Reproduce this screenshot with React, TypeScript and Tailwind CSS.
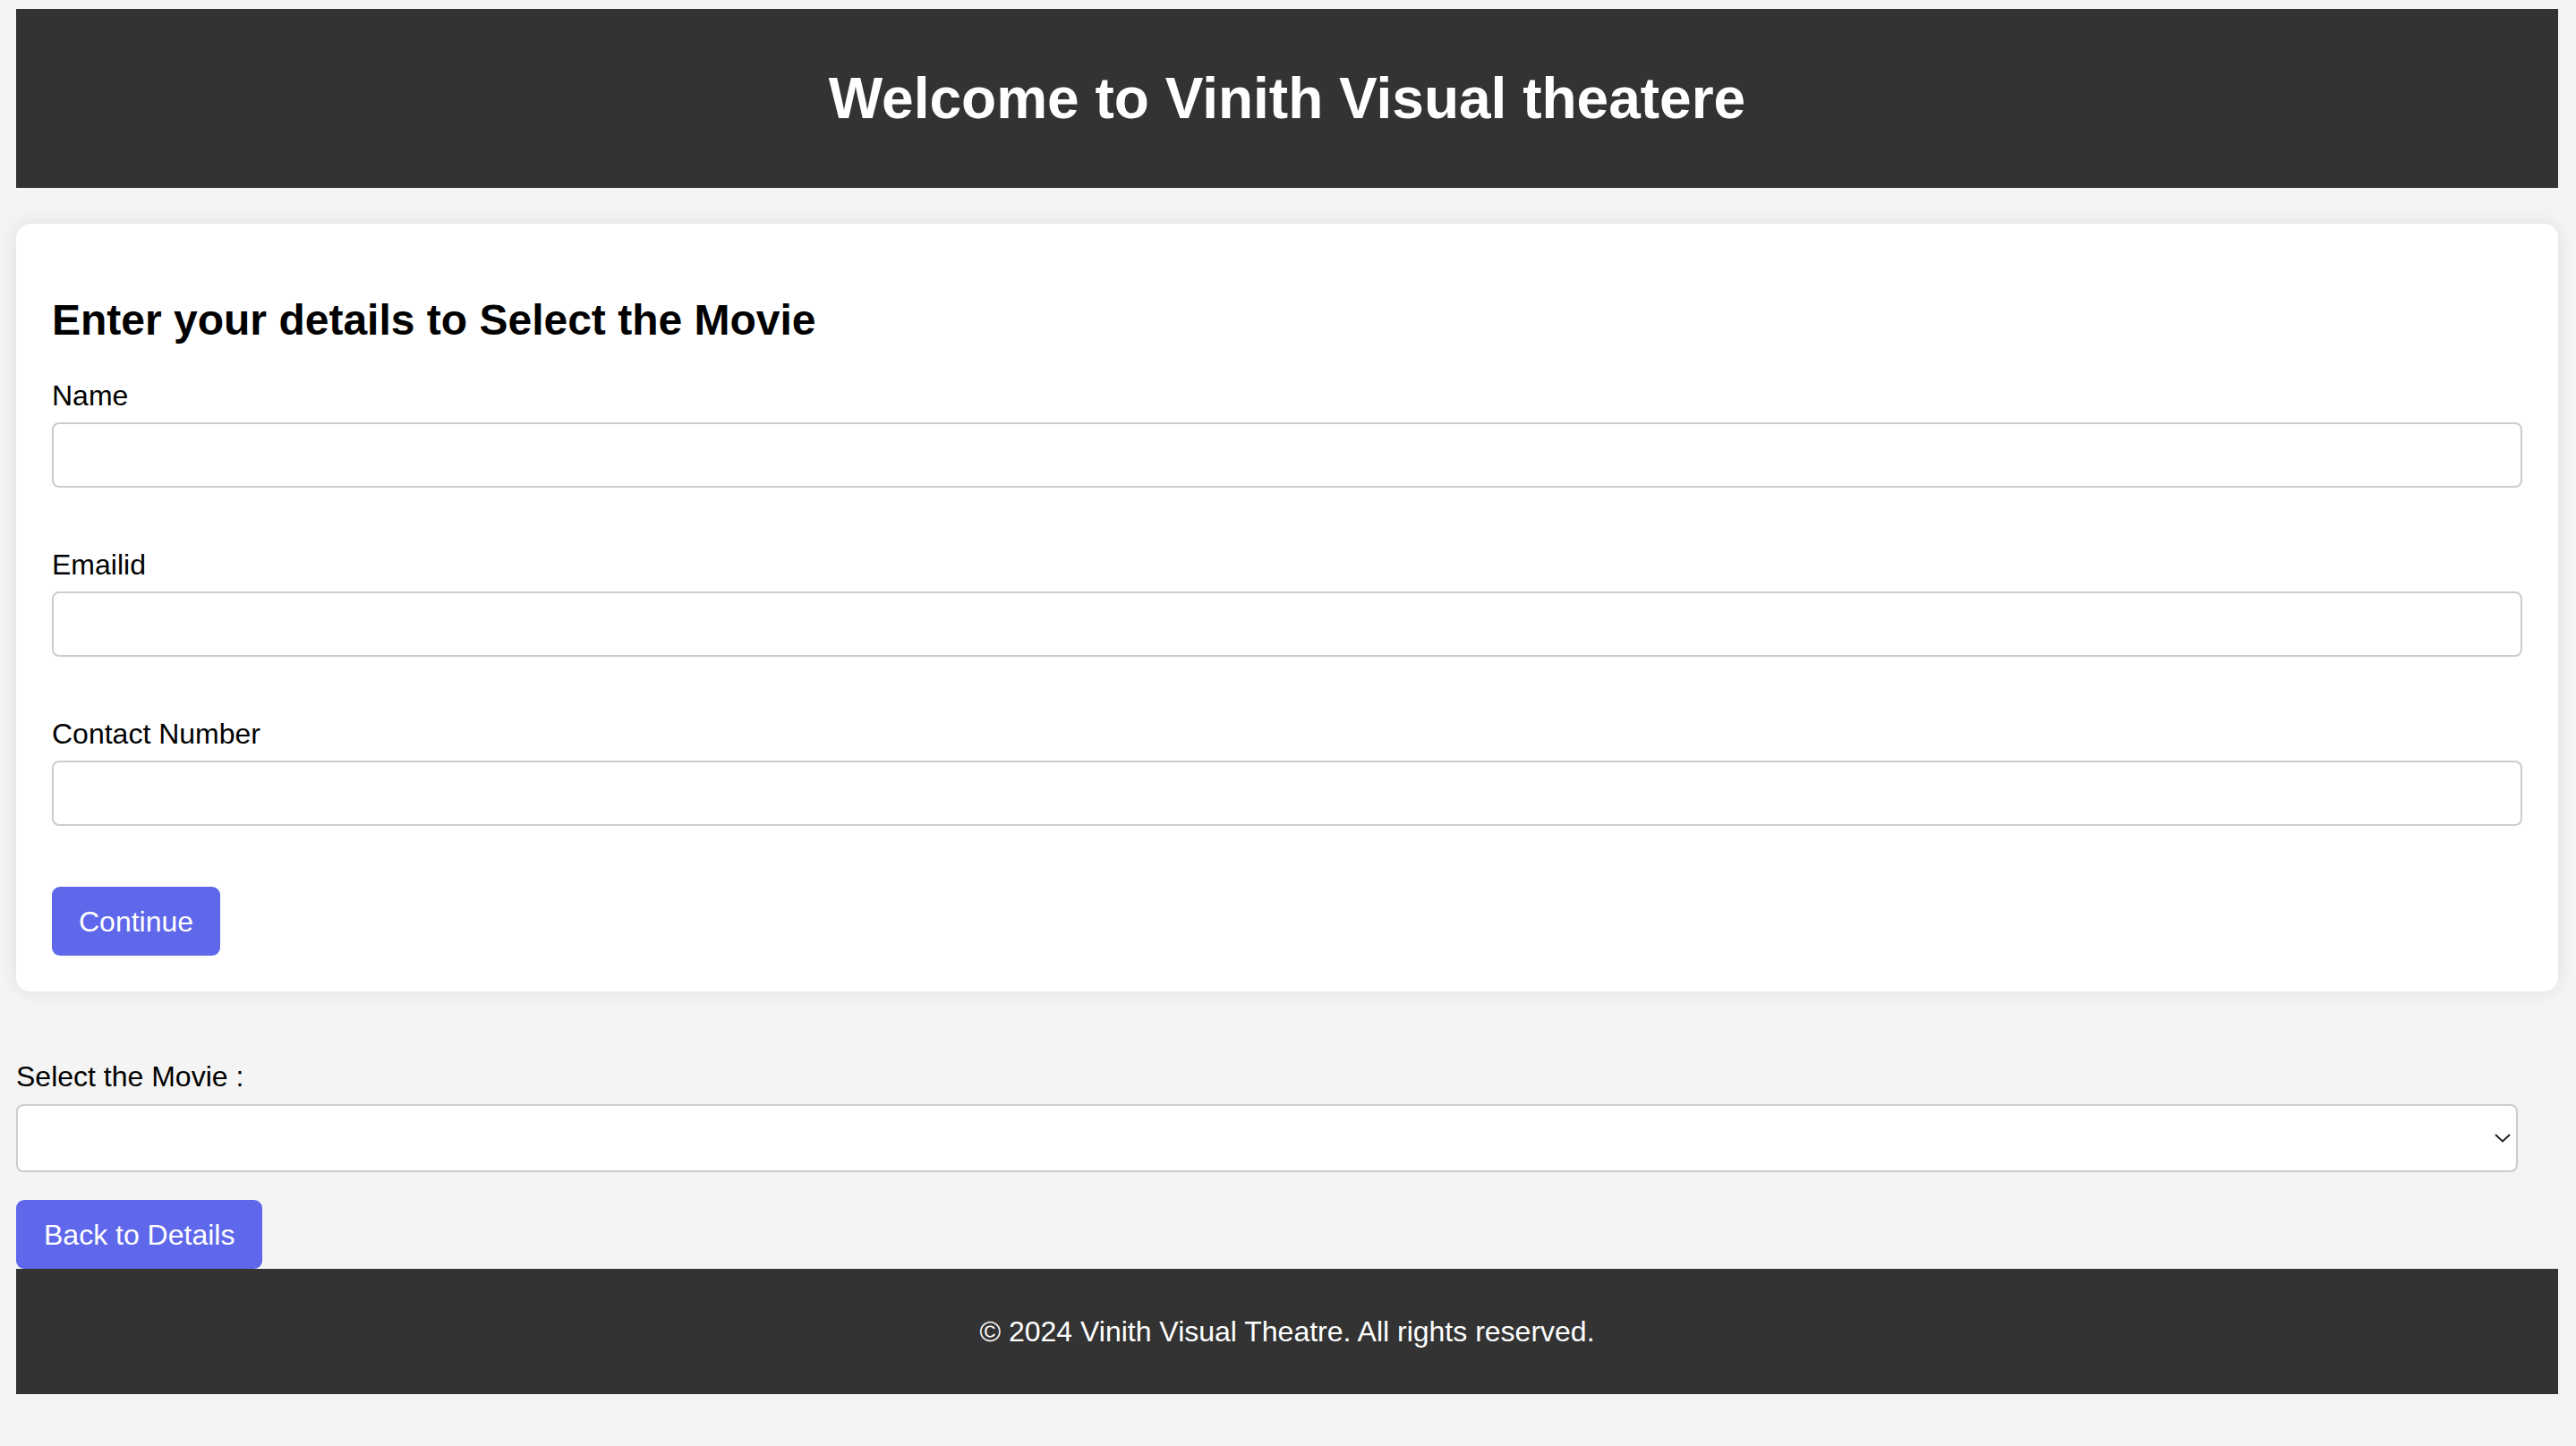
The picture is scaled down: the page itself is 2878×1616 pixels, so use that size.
import { useState } from "react"

const sans = { fontFamily: '"Liberation Sans", Arial, Helvetica, sans-serif' }

interface FieldProps {
  label: string
  type?: string
  value: string
  onChange: (v: string) => void
}

function Field({ label, type = "text", value, onChange }: FieldProps) {
  return (
    <div className="mb-[68px]">
      <label className="block text-[32px] leading-[36px] text-black mb-[12px]">{label}</label>
      <input
        type={type}
        value={value}
        onChange={(e) => onChange(e.target.value)}
        className="block w-full h-[73px] bg-white border-2 border-[#cccccc] rounded-[8px] px-4 text-[32px] outline-none"
      />
    </div>
  )
}

export default function App() {
  const [name, setName] = useState("")
  const [email, setEmail] = useState("")
  const [phone, setPhone] = useState("")
  const [movie, setMovie] = useState("")

  return (
    <div className="min-h-screen bg-[#f4f4f4] pt-[10px] pl-[18px] pr-[20px]" style={sans}>
      <header className="h-[200px] bg-[#333333] flex items-center justify-center">
        <h1 className="text-[64px] leading-[74px] font-bold text-white">Welcome to Vinith Visual theatere</h1>
      </header>

      <section className="mt-[40px] bg-white rounded-[16px] shadow-[0_0_20px_rgba(0,0,0,0.09)] px-[40px] pt-[40px] pb-[40px]">
        <h2 className="text-[48px] leading-[56px] font-bold text-black mt-[40px] mb-[38px]">
          Enter your details to Select the Movie
        </h2>
        <Field label="Name" value={name} onChange={setName} />
        <Field label="Emailid" type="email" value={email} onChange={setEmail} />
        <Field label="Contact Number" type="tel" value={phone} onChange={setPhone} />
        <button className="h-[77px] px-[30px] bg-[#5f68eb] text-white text-[32px] leading-[36px] rounded-[9px]">
          Continue
        </button>
      </section>

      <div className="mt-[77px] pr-[45px]">
        <label className="block text-[32px] leading-[36px] text-black mb-[13px]">Select the Movie :</label>
        <div className="relative">
          <select
            value={movie}
            onChange={(e) => setMovie(e.target.value)}
            className="block w-full h-[76px] appearance-none bg-white border-2 border-[#cccccc] rounded-[8px] px-4 text-[32px] outline-none"
          >
            <option value=""></option>
          </select>
          <svg
            className="absolute right-[8px] top-1/2 -translate-y-1/2 pointer-events-none"
            width="18"
            height="11"
            viewBox="0 0 18 11"
            fill="none"
          >
            <path d="M1 1.5 L9 9 L17 1.5" stroke="#1f1f1f" strokeWidth="2" />
          </svg>
        </div>
      </div>

      <button className="mt-[31px] h-[77px] px-[31px] bg-[#5f68eb] text-white text-[32px] leading-[36px] rounded-[9px]">
        Back to Details
      </button>

      <footer className="h-[140px] bg-[#333333] flex items-center justify-center">
        <p className="text-[32px] leading-[36px] text-white">© 2024 Vinith Visual Theatre. All rights reserved.</p>
      </footer>
    </div>
  )
}
